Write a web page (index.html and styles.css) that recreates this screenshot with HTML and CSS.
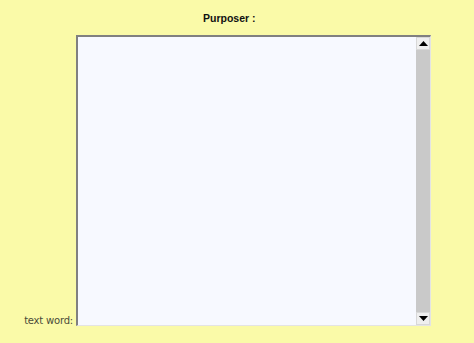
FILE: index.html
```html
<!DOCTYPE html>
<html>
<head>
<meta charset="utf-8">
<link rel="stylesheet" href="styles.css">
</head>
<body>
<div class="page">
  <div class="title">Purposer :</div>
  <div class="row">
    <div class="label">text word:</div>
    <div class="box">
      <div class="area"></div>
      <div class="scroll">
        <div class="btn"><svg width="9" height="5" viewBox="0 0 9 5"><path d="M0 5 L4.5 0 L9 5 Z" fill="#000"/></svg></div>
        <div class="track"></div>
        <div class="btn"><svg width="9" height="5" viewBox="0 0 9 5"><path d="M0 0 L4.5 5 L9 0 Z" fill="#000"/></svg></div>
      </div>
    </div>
  </div>
</div>
</body>
</html>
```
FILE: styles.css
```css
html, body {
  margin: 0;
  padding: 0;
  background: #fafaa8;
  font-family: "DejaVu Sans", "Liberation Sans", sans-serif;
}
.page {
  padding-top: 12px;
  width: 474px;
  height: 343px;
  box-sizing: border-box;
}
.title {
  margin-left: 203px;
  font-family: "Liberation Sans", sans-serif;
  font-size: 10.5px;
  font-weight: bold;
  color: #111;
  height: 23px;
  line-height: 12px;
}
.row {
  display: flex;
  align-items: flex-end;
}
.label {
  width: 73px;
  text-align: right;
  padding-right: 3px;
  font-size: 10px;
  letter-spacing: -0.2px;
  color: #4a4a3a;
  line-height: 12px;
  margin-bottom: -1px;
}
.box {
  width: 355px;
  height: 291px;
  box-sizing: border-box;
  border-top: 2px solid #808080;
  border-left: 2px solid #808080;
  border-right: 1px solid #e4e4e4;
  border-bottom: 1px solid #e4e4e4;
  background: #f7f9ff;
  display: flex;
}
.area {
  flex: 1;
}
.scroll {
  width: 14px;
  display: flex;
  flex-direction: column;
  background: #c8c8c8;
}
.btn {
  height: 13px;
  background: #efefef;
  border: 1px solid #d8d8d8;
  box-sizing: border-box;
  display: flex;
  align-items: center;
  justify-content: center;
}
.track {
  flex: 1;
  background: #c9c9c9;
}
```
